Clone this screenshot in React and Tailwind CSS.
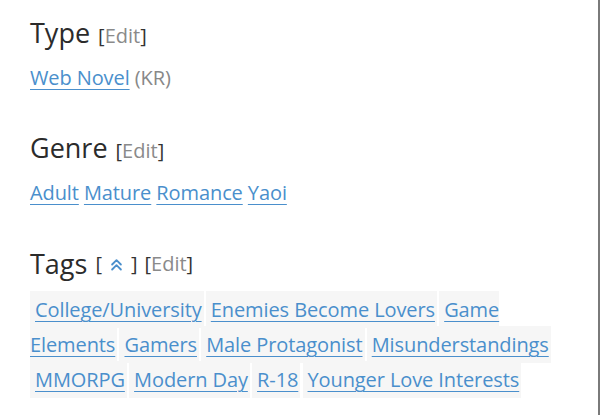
import React from "react";

const font = { fontFamily: '"Open Sans", "Noto Sans", sans-serif' };

function Edit() {
  return (
    <span className="text-[20px] text-[#333] ml-[8px]">
      [<span className="text-[#8a8a8a]">Edit</span>]
    </span>
  );
}

const tags = [
  "College/University",
  "Enemies Become Lovers",
  "Game Elements",
  "Gamers",
  "Male Protagonist",
  "Misunderstandings",
  "MMORPG",
  "Modern Day",
  "R-18",
  "Younger Love Interests",
];

const linkCls = "text-[#4a8fcc] underline decoration-1 underline-offset-[4px]";

export default function App() {
  return (
    <div className="w-[600px] h-[415px] bg-white overflow-hidden border-r-2 border-[#7a7a7a]" style={font}>
      <div className="pl-[30px] pt-[15px]">
        <div className="h-[36px] leading-[36px] text-[27px] text-[#2b2b2b]">
          Type<Edit />
        </div>
        <div className="mt-[12px] h-[30px] leading-[30px] text-[20px] tracking-[-0.1px]">
          <a className={linkCls}>Web Novel</a>{" "}
          <span className="text-[#888]">(KR)</span>
        </div>

        <div className="mt-[37px] h-[36px] leading-[36px] text-[27px] text-[#2b2b2b]">
          Genre<Edit />
        </div>
        <div className="mt-[12px] h-[30px] leading-[30px] text-[20px] tracking-[-0.1px]">
          <a className={linkCls}>Adult</a>{" "}
          <a className={linkCls}>Mature</a>{" "}
          <a className={linkCls}>Romance</a>{" "}
          <a className={linkCls}>Yaoi</a>
        </div>

        <div className="mt-[38px] h-[36px] leading-[36px] text-[27px] text-[#2b2b2b] flex items-center">
          <span>Tags</span>
          <span className="text-[20px] text-[#333] ml-[8px] flex items-center">
            [
            <svg className="mx-[7px]" width="15" height="15" viewBox="0 0 24 24" fill="none" stroke="#4a8fcc" strokeWidth="3" strokeLinecap="round" strokeLinejoin="round">
              <path d="M5 12l7-7 7 7" />
              <path d="M5 20l7-7 7 7" />
            </svg>
            ]
          </span>
          <span className="text-[20px] text-[#333] ml-[7px]">
            [<span className="text-[#8a8a8a]">Edit</span>]
          </span>
        </div>
        <div className="mt-[10px] w-[545px] leading-[35px] text-[20px]">
          {tags.map((t, i) => (
            <React.Fragment key={t}>
              <a className={"bg-[#f6f6f6] pl-[5px] pr-[2px] py-[5px] tracking-[-0.1px] " + linkCls}>{t}</a>
              {i < tags.length - 1 && <span className="tracking-[-3px]"> </span>}
            </React.Fragment>
          ))}
        </div>
      </div>
    </div>
  );
}
